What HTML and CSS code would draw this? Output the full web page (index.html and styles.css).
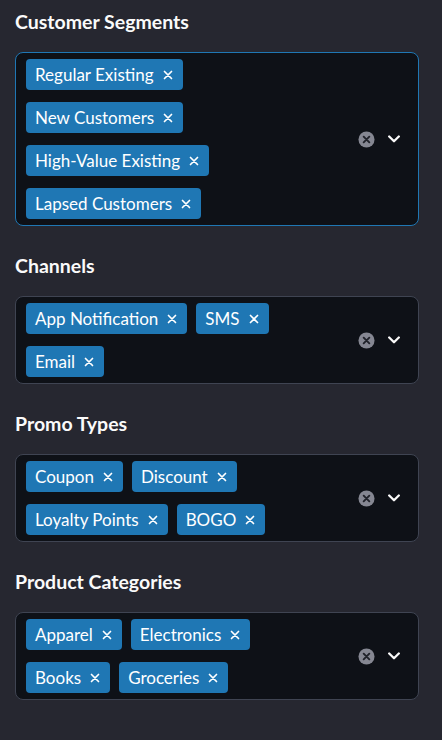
FILE: index.html
```html
<!DOCTYPE html>
<html>
<head>
<meta charset="utf-8">
<link rel="stylesheet" href="styles.css">
</head>
<body>
<div class="sidebar">
  <div class="field">
    <div class="label">Customer Segments</div>
    <div class="select focused">
      <div class="values">
        <span class="tag">Regular Existing<svg class="x" viewBox="0 0 10 10"><path d="M1.5 1.5L8.5 8.5M8.5 1.5L1.5 8.5"/></svg></span>
        <span class="tag">New Customers<svg class="x" viewBox="0 0 10 10"><path d="M1.5 1.5L8.5 8.5M8.5 1.5L1.5 8.5"/></svg></span>
        <span class="tag">High-Value Existing<svg class="x" viewBox="0 0 10 10"><path d="M1.5 1.5L8.5 8.5M8.5 1.5L1.5 8.5"/></svg></span>
        <span class="tag">Lapsed Customers<svg class="x" viewBox="0 0 10 10"><path d="M1.5 1.5L8.5 8.5M8.5 1.5L1.5 8.5"/></svg></span>
      </div>
      <div class="indicators">
        <svg class="clear" viewBox="0 0 18 18"><circle cx="9" cy="9" r="8.5"/><path d="M6 6L12 12M12 6L6 12"/></svg>
        <svg class="chev" viewBox="0 0 12 8"><path d="M1.2 1.5L6 6.2L10.8 1.5"/></svg>
      </div>
    </div>
  </div>
  <div class="field">
    <div class="label">Channels</div>
    <div class="select">
      <div class="values">
        <span class="tag">App Notification<svg class="x" viewBox="0 0 10 10"><path d="M1.5 1.5L8.5 8.5M8.5 1.5L1.5 8.5"/></svg></span>
        <span class="tag">SMS<svg class="x" viewBox="0 0 10 10"><path d="M1.5 1.5L8.5 8.5M8.5 1.5L1.5 8.5"/></svg></span>
        <span class="tag">Email<svg class="x" viewBox="0 0 10 10"><path d="M1.5 1.5L8.5 8.5M8.5 1.5L1.5 8.5"/></svg></span>
      </div>
      <div class="indicators">
        <svg class="clear" viewBox="0 0 18 18"><circle cx="9" cy="9" r="8.5"/><path d="M6 6L12 12M12 6L6 12"/></svg>
        <svg class="chev" viewBox="0 0 12 8"><path d="M1.2 1.5L6 6.2L10.8 1.5"/></svg>
      </div>
    </div>
  </div>
  <div class="field">
    <div class="label">Promo Types</div>
    <div class="select">
      <div class="values">
        <span class="tag">Coupon<svg class="x" viewBox="0 0 10 10"><path d="M1.5 1.5L8.5 8.5M8.5 1.5L1.5 8.5"/></svg></span>
        <span class="tag">Discount<svg class="x" viewBox="0 0 10 10"><path d="M1.5 1.5L8.5 8.5M8.5 1.5L1.5 8.5"/></svg></span>
        <span class="tag">Loyalty Points<svg class="x" viewBox="0 0 10 10"><path d="M1.5 1.5L8.5 8.5M8.5 1.5L1.5 8.5"/></svg></span>
        <span class="tag">BOGO<svg class="x" viewBox="0 0 10 10"><path d="M1.5 1.5L8.5 8.5M8.5 1.5L1.5 8.5"/></svg></span>
      </div>
      <div class="indicators">
        <svg class="clear" viewBox="0 0 18 18"><circle cx="9" cy="9" r="8.5"/><path d="M6 6L12 12M12 6L6 12"/></svg>
        <svg class="chev" viewBox="0 0 12 8"><path d="M1.2 1.5L6 6.2L10.8 1.5"/></svg>
      </div>
    </div>
  </div>
  <div class="field">
    <div class="label">Product Categories</div>
    <div class="select">
      <div class="values">
        <span class="tag">Apparel<svg class="x" viewBox="0 0 10 10"><path d="M1.5 1.5L8.5 8.5M8.5 1.5L1.5 8.5"/></svg></span>
        <span class="tag">Electronics<svg class="x" viewBox="0 0 10 10"><path d="M1.5 1.5L8.5 8.5M8.5 1.5L1.5 8.5"/></svg></span>
        <span class="tag">Books<svg class="x" viewBox="0 0 10 10"><path d="M1.5 1.5L8.5 8.5M8.5 1.5L1.5 8.5"/></svg></span>
        <span class="tag">Groceries<svg class="x" viewBox="0 0 10 10"><path d="M1.5 1.5L8.5 8.5M8.5 1.5L1.5 8.5"/></svg></span>
      </div>
      <div class="indicators">
        <svg class="clear" viewBox="0 0 18 18"><circle cx="9" cy="9" r="8.5"/><path d="M6 6L12 12M12 6L6 12"/></svg>
        <svg class="chev" viewBox="0 0 12 8"><path d="M1.2 1.5L6 6.2L10.8 1.5"/></svg>
      </div>
    </div>
  </div>
</div>
</body>
</html>
```

FILE: styles.css
```css
html, body {
  margin: 0;
  padding: 0;
  background: #262730;
  height: 100%;
}
body {
  font-family: Lato, "Liberation Sans", sans-serif;
  color: #fafafa;
}
.sidebar {
  padding: 10px 23px 0 15px;
}
.field {
  margin-bottom: 28px;
}
.label {
  font-size: 19.5px;
  font-weight: 700;
  line-height: 24px;
  margin-bottom: 18px;
  color: #fafafa;
}
.select {
  display: flex;
  align-items: center;
  background: #0e1117;
  border: 1px solid #3f4452;
  border-radius: 8px;
}
.select.focused {
  border-color: #1f77b4;
}
.values {
  flex: 1;
  display: flex;
  flex-wrap: wrap;
  column-gap: 9px;
  row-gap: 12px;
  padding: 6px 0 6px 10px;
}
.tag {
  display: inline-flex;
  align-items: center;
  height: 31px;
  padding: 0 10px 0 9px;
  background: #1f77b4;
  border-radius: 4px;
  font-size: 17px;
  color: #ffffff;
  white-space: nowrap;
}
.x {
  width: 10px;
  height: 10px;
  margin-left: 9px;
  fill: none;
  stroke: #ffffff;
  stroke-width: 1.7;
  stroke-linecap: round;
}
.indicators {
  display: flex;
  align-items: center;
  gap: 13px;
  padding: 0 18px 0 19px;
}
.clear {
  width: 17px;
  height: 17px;
}
.clear circle {
  fill: #858792;
}
.clear path {
  fill: none;
  stroke: #20222a;
  stroke-width: 2;
  stroke-linecap: round;
}
.chev {
  width: 12px;
  height: 8px;
  fill: none;
  stroke: #fafafa;
  stroke-width: 2.3;
  stroke-linecap: round;
  stroke-linejoin: round;
}
```
